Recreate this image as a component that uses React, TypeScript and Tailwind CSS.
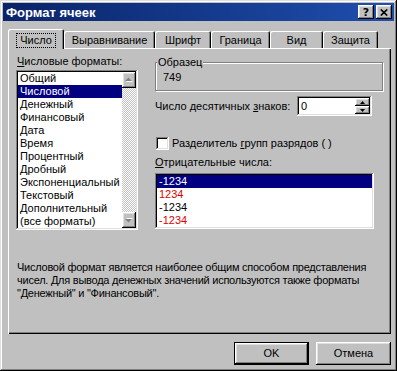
import React from 'react'

const raised =
  'shadow-[inset_-1px_-1px_#000,inset_1px_1px_#fff,inset_-2px_-2px_#808080,inset_2px_2px_#dfdfdf]'
const sunken =
  'shadow-[inset_-1px_-1px_#fff,inset_1px_1px_#808080,inset_-2px_-2px_#dfdfdf,inset_2px_2px_#000]'
const tabEdge =
  'shadow-[inset_1px_1px_#fff,inset_-1px_0_#000,inset_-2px_0_#808080]'

const formats = [
  'Общий',
  'Числовой',
  'Денежный',
  'Финансовый',
  'Дата',
  'Время',
  'Процентный',
  'Дробный',
  'Экспоненциальный',
  'Текстовый',
  'Дополнительный',
  '(все форматы)',
]

const tabs = [
  { label: 'Выравнивание', w: 'w-[91px]' },
  { label: 'Шрифт', w: 'w-[56px]' },
  { label: 'Граница', w: 'w-[59px]' },
  { label: 'Вид', w: 'w-[53px]' },
  { label: 'Защита', w: 'w-[55px]' },
]

const negatives = [
  { text: '-1234', red: false },
  { text: '1234', red: true },
  { text: '-1234', red: false },
  { text: '-1234', red: true },
]

// small grey arrow of a disabled scroll button
const ScrollArrow = ({ down }: { down?: boolean }) => (
  <svg width="9" height="6" viewBox="0 0 9 6">
    <g transform={down ? 'translate(0 6) scale(1 -1)' : undefined}>
      <path d="M2 5h7L5.5 1.5z" fill="#fff" />
      <path d="M1 4h7L4.5 0.5z" fill="#808080" />
    </g>
  </svg>
)

const SpinArrow = ({ down }: { down?: boolean }) => (
  <svg width="5" height="3" viewBox="0 0 5 3">
    <path d={down ? 'M0 0h5L2.5 3z' : 'M0 3h5L2.5 0z'} fill="#000" />
  </svg>
)

const App = () => {
  return (
    <div className="flex h-[371px] w-[397px] flex-col overflow-hidden bg-[#c0c0c0] p-[3px] font-['Liberation_Sans',Arial,sans-serif] text-[11px] text-black shadow-[inset_-1px_-1px_#000,inset_1px_1px_#dfdfdf,inset_-2px_-2px_#808080,inset_2px_2px_#fff]">
      {/* title bar */}
      <div className="flex h-[18px] items-center justify-between bg-linear-to-r from-[#0a246a] to-[#1f4fae]">
        <span className="pl-[3px] text-[13px] leading-none font-bold text-white">
          Формат ячеек
        </span>
        <div className="flex gap-[2px] pr-[2px]">
          <div
            className={`flex h-[14px] w-[16px] items-center justify-center bg-[#c0c0c0] ${raised}`}
          >
            <span className="font-['DejaVu_Sans',sans-serif] text-[11px] leading-none font-bold">
              ?
            </span>
          </div>
          <div
            className={`flex h-[14px] w-[16px] items-center justify-center bg-[#c0c0c0] ${raised}`}
          >
            <svg width="8" height="7" viewBox="0 0 8 7">
              <path
                d="M0.8 0.5L7.2 6.5M7.2 0.5L0.8 6.5"
                stroke="#000"
                strokeWidth="1.7"
              />
            </svg>
          </div>
        </div>
      </div>

      {/* tabs */}
      <div className="mt-[8px] ml-[5px] flex h-[19px] items-end">
        <div
          className={`relative z-10 -mb-px flex h-[20px] w-[56px] justify-center rounded-t-[2px] bg-[#c0c0c0] pt-[4px] ${tabEdge}`}
        >
          <span className="h-[15px] border border-dotted border-black px-[3px] leading-[13px]">
            Число
          </span>
        </div>
        {tabs.map((t) => (
          <div
            key={t.label}
            className={`flex h-[17px] justify-center rounded-t-[2px] pt-[3px] leading-[13px] ${t.w} ${tabEdge}`}
          >
            {t.label}
          </div>
        ))}
      </div>

      {/* panel */}
      <div className="ml-[5px] flex h-[286px] w-[383px] flex-col bg-[#c0c0c0] shadow-[inset_1px_1px_#fff,inset_-1px_-1px_#000,inset_-2px_-2px_#808080]">
        <div className="flex pt-[7px] pl-[8px]">
          <div className="w-[122px]">
            <div className="pl-px leading-[13px]">
              <u>Ч</u>исловые форматы:
            </div>
            <div className={`mt-[2px] flex h-[160px] bg-white p-[2px] ${sunken}`}>
              <div className="flex-1">
                {formats.map((f, i) => (
                  <div
                    key={f}
                    className={`h-[13px] px-[2px] leading-[13px] whitespace-nowrap ${
                      i === 1 ? 'bg-[#000080] text-white' : ''
                    }`}
                  >
                    {f}
                  </div>
                ))}
              </div>
              <div className="flex w-[16px] flex-col">
                <div
                  className={`flex h-[16px] items-center justify-center bg-[#c0c0c0] ${raised}`}
                >
                  <ScrollArrow />
                </div>
                <div className="flex-1 bg-[repeating-conic-gradient(#c0c0c0_0_25%,#ffffff_0_50%)] bg-[length:2px_2px]" />
                <div
                  className={`flex h-[16px] items-center justify-center bg-[#c0c0c0] ${raised}`}
                >
                  <ScrollArrow down />
                </div>
              </div>
            </div>
          </div>

          <div className="ml-[17px] w-[228px]">
            <div className="relative mt-[7px] h-[29px] border border-[#808080] shadow-[inset_1px_1px_#fff,1px_1px_#fff]">
              <span className="absolute -top-[7px] left-[1px] bg-[#c0c0c0] px-px leading-[13px]">
                Образец
              </span>
              <div className="pt-[8px] pl-[7px] leading-[13px]">749</div>
            </div>

            <div className="mt-[5px] flex h-[20px] items-center">
              <span className="w-[142px] leading-[13px]">
                Число десятичных <u>з</u>наков:
              </span>
              <div className={`flex h-[20px] w-[75px] bg-white p-[2px] ${sunken}`}>
                <span className="flex-1 pl-[2px] leading-[16px]">0</span>
                <div className="flex w-[15px] flex-col">
                  <div
                    className={`flex h-[8px] items-center justify-center bg-[#c0c0c0] ${raised}`}
                  >
                    <SpinArrow />
                  </div>
                  <div
                    className={`flex h-[8px] items-center justify-center bg-[#c0c0c0] ${raised}`}
                  >
                    <SpinArrow down />
                  </div>
                </div>
              </div>
            </div>

            <div className="mt-[21px] flex h-[13px] items-center">
              <div className={`ml-px h-[13px] w-[13px] bg-white ${sunken}`} />
              <span className="ml-[3px] leading-[13px]">
                Разделитель <u>г</u>рупп разрядов ( )
              </span>
            </div>

            <div className="mt-[6px] leading-[13px]">
              <u>О</u>трицательные числа:
            </div>
            <div className={`mt-[4px] h-[56px] w-[219px] bg-white p-[2px] ${sunken}`}>
              {negatives.map((n, i) => (
                <div
                  key={i}
                  className={`h-[13px] px-[2px] leading-[13px] ${
                    i === 0
                      ? 'bg-[#000080] text-white'
                      : n.red
                        ? 'text-[#e00000]'
                        : ''
                  }`}
                >
                  {n.text}
                </div>
              ))}
            </div>
          </div>
        </div>

        <div className="mt-[31px] pl-[9px] leading-[13px] tracking-[-0.25px] whitespace-nowrap">
          Числовой формат является наиболее общим способом представления
          <br />
          чисел. Для вывода денежных значений используются также форматы
          <br />
          "Денежный" и "Финансовый".
        </div>
      </div>

      {/* buttons */}
      <div className="mt-[8px] flex justify-end gap-[7px] pr-[3px]">
        <button
          className={`h-[23px] w-[75px] border border-black bg-[#c0c0c0] leading-[13px] ${raised}`}
        >
          OK
        </button>
        <button className={`h-[23px] w-[75px] bg-[#c0c0c0] leading-[13px] ${raised}`}>
          Отмена
        </button>
      </div>
    </div>
  )
}

export default App
